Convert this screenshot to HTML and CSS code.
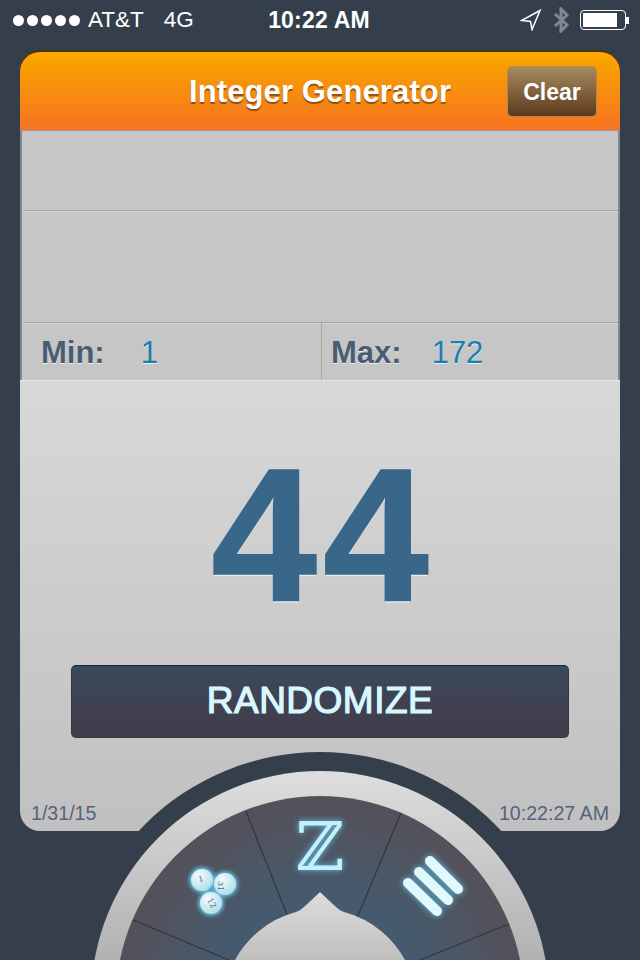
FILE: index.html
```html
<!DOCTYPE html>
<html lang="en">
<head>
<meta charset="utf-8">
<title>Integer Generator</title>
<link rel="stylesheet" href="styles.css">
</head>
<body>
<div class="screen">
  <header class="status">
    <div class="status-left">
      <span class="dots"><i></i><i></i><i></i><i></i><i></i></span>
      <span class="carrier">AT&amp;T</span>
      <span class="network">4G</span>
    </div>
    <div class="status-time">10:22 AM</div>
    <div class="status-right">
      <svg class="ico-loc" width="22" height="22" viewBox="0 0 22 22"><path d="M20 1.5 1.5 11.5 10.5 12.5 12 20.5Z"/></svg>
      <svg class="ico-bt" width="16" height="26" viewBox="0 0 16 26"><path d="M2 7 14 18 8 24V2l6 6L2 19"/></svg>
      <span class="battery"><span class="battery-fill"></span></span>
      <span class="battery-nub"></span>
    </div>
  </header>
  <main class="card">
    <div class="titlebar">
      <h1 class="title">Integer Generator</h1>
      <button class="clear">Clear</button>
    </div>
    <div class="table">
      <div class="row row-a"></div>
      <div class="row row-b"></div>
      <div class="row row-c">
        <div class="cell cell-min"><span class="lab">Min:</span><span class="val">1</span></div>
        <div class="cell cell-max"><span class="lab">Max:</span><span class="val">172</span></div>
      </div>
    </div>
    <div class="panel">
      <div class="result">44</div>
      <button class="randomize">RANDOMIZE</button>
      <div class="stamps"><span>1/31/15</span><span>10:22:27 AM</span></div>
    </div>
  </main>
  <svg class="wheel" width="640" height="220" viewBox="0 740 640 220">
    <defs>
      <linearGradient id="ringG" x1="0" y1="0" x2="0" y2="1">
        <stop offset="0" stop-color="#dedede"/>
        <stop offset="0.45" stop-color="#aeaeae"/>
        <stop offset="1" stop-color="#9a9a9a"/>
      </linearGradient>
      <radialGradient id="faceG" gradientUnits="userSpaceOnUse" cx="320" cy="1000" r="205">
        <stop offset="0.5" stop-color="#455a6e"/>
        <stop offset="0.8" stop-color="#4f5561"/>
        <stop offset="1" stop-color="#55505a"/>
      </radialGradient>
      <linearGradient id="hubG" gradientUnits="userSpaceOnUse" x1="0" y1="892" x2="0" y2="965">
        <stop offset="0" stop-color="#dcdcdc"/>
        <stop offset="1" stop-color="#bdbdbd"/>
      </linearGradient>
      <radialGradient id="ballG" cx="0.35" cy="0.3" r="0.8">
        <stop offset="0" stop-color="#f2fbfd"/>
        <stop offset="1" stop-color="#aed9e8"/>
      </radialGradient>
    </defs>
    <circle class="w-gap" cx="320" cy="1000" r="248"/>
    <circle cx="320" cy="1000" r="229" fill="url(#ringG)"/>
    <circle cx="320" cy="1000" r="204" fill="url(#faceG)"/>
    <g class="w-div">
      <line x1="245.7" y1="810.7" x2="288" y2="917"/>
      <line x1="401" y1="812.7" x2="357" y2="918"/>
      <line x1="133" y1="920" x2="229" y2="960"/>
      <line x1="509" y1="924" x2="420" y2="960"/>
    </g>
    <g class="w-glow">
      <circle cx="202" cy="880" r="11" fill="url(#ballG)"/>
      <circle cx="225" cy="884" r="11" fill="url(#ballG)"/>
      <circle cx="211" cy="903" r="11" fill="url(#ballG)"/>
    </g>
    <text class="w-num" transform="translate(199 882) rotate(-15)">1</text>
    <text class="w-num" transform="translate(221 887) rotate(90) translate(-6 3)">31</text>
    <text class="w-num" transform="translate(207 900) rotate(60)">12</text>
    <text class="w-z" x="320" y="870">ℤ</text>
    <g class="w-bars">
      <line x1="408" y1="883" x2="437" y2="911"/>
      <line x1="419" y1="872" x2="448" y2="900"/>
      <line x1="430" y1="861" x2="458" y2="889"/>
    </g>
    <path class="w-hub" fill="url(#hubG)" d="M320 892 336 907 Q340 911 344 912 A97.5 97.5 0 0 1 407.5 965 H232.5 A97.5 97.5 0 0 1 296 912 Q300 911 304 907Z"/>
  </svg>
</div>
</body>
</html>
```
FILE: styles.css
```css
* { box-sizing: border-box; }
html, body { margin: 0; padding: 0; }
body { background: #353f4c; font-family: "Liberation Sans", Arial, sans-serif; }
.screen { position: relative; width: 640px; height: 960px; overflow: hidden; background: #353f4c; padding: 0 20px; }

.status { display: flex; align-items: center; justify-content: space-between; height: 40px; margin: 0 -20px; padding: 0 11px 0 13px; color: #fff; font-size: 22.5px; position: relative; }
.status-left { display: flex; align-items: center; }
.dots { display: flex; gap: 3px; margin-right: 8px; }
.dots i { width: 11px; height: 11px; border-radius: 50%; background: #fff; display: block; }
.network { margin-left: 20px; }
.status-time { position: absolute; left: 0; right: 2px; text-align: center; font-weight: bold; font-size: 23px; letter-spacing: 0.2px; }
.status-right { display: flex; align-items: center; position: relative; }
.ico-loc { fill: none; stroke: #fff; stroke-width: 1.5; margin-right: 11px; }
.ico-bt { fill: none; stroke: #7f8791; stroke-width: 3; margin-right: 11px; }
.battery { width: 46px; height: 20px; border: 1.5px solid #fff; border-radius: 4px; padding: 2px; display: block; }
.battery-fill { display: block; width: 34px; height: 100%; background: #fff; }
.battery-nub { width: 3px; height: 7px; background: #fff; display: block; }

.card { margin-top: 12px; height: 779px; border-radius: 20px; display: flex; flex-direction: column; overflow: hidden; box-shadow: 0 -1.5px 0 #4a3205; }
.titlebar { height: 78px; flex: none; display: flex; align-items: center; justify-content: flex-end; padding-right: 23px; position: relative; background: linear-gradient(#ffaa00, #f8a000 15%, #f67322); }
.title { position: absolute; left: 0; right: 0; top: 22px; margin: 0; text-align: center; color: #fff; font-size: 31px; line-height: 36px; font-weight: bold; letter-spacing: 0.12px; text-shadow: 0 2px 1px rgba(110, 60, 10, .75); }
.clear { width: 90px; height: 51px; padding: 2px 0 0; border: 1px solid #b48a3f; border-radius: 5px; background: linear-gradient(#a78a60, #5b3a1c); color: #fff; font: bold 23px "Liberation Sans", Arial, sans-serif; }

.table { height: 250px; flex: none; background: #c6c6c6; border-left: 2px solid #7f8791; border-right: 2px solid #7f8791; border-top: 1px solid #9a9a9a; display: flex; flex-direction: column; }
.row { flex: none; border-bottom: 1px solid #a5a5a5; box-shadow: 0 1px 0 #d4d4d4; }
.row-a { height: 80px; margin-left: 2px; }
.row-b { height: 112px; margin-left: 2px; }
.row-c { flex: 1; display: flex; border-bottom: 0; box-shadow: none; }
.cell { display: flex; align-items: center; font-size: 31px; line-height: 55px; padding-top: 2px; }
.cell-min { width: 300px; border-right: 1px solid #a5a5a5; padding-left: 19px; }
.cell-max { flex: 1; padding-left: 9px; }
.lab { font-weight: bold; color: #4a5c74; text-shadow: 0 1px 0 #eee; }
.val { color: #1b7db0; text-shadow: 0 1px 0 #eee; }
.cell-min .val { margin-left: 36px; }
.cell-max .val { margin-left: 30px; }

.panel { flex: 1; position: relative; display: flex; flex-direction: column; align-items: center; background: linear-gradient(#d8d8d8, #c0c0c0); border-top: 1px solid #eaeaea; }
.result { margin-top: 38px; height: 232px; padding-left: 6px; font-size: 190px; line-height: 232px; font-weight: bold; letter-spacing: 6px; color: #38678a; -webkit-text-stroke: 1.5px #38678a; text-shadow: 0 2px 0 #eee; }
.randomize { margin-top: 14px; width: 498px; height: 73px; padding: 0 0 1px; border: 1px solid #33363e; border-top-color: #22252c; border-radius: 5px; background: linear-gradient(#394a5d, #404050 60%, #403e4a); color: #d8f8ff; font: 37px "Liberation Sans", Arial, sans-serif; letter-spacing: 0.5px; -webkit-text-stroke: 1.2px #d8f8ff; }
.stamps { position: absolute; left: 11px; right: 11px; bottom: 6px; display: flex; justify-content: space-between; color: #56647a; font-size: 19.6px; line-height: 24px; }

.wheel { position: absolute; left: 0; top: 740px; display: block; }
.w-gap { fill: #353f4c; }
.w-div line { stroke: #33353d; stroke-width: 1.2; }
.w-glow { filter: drop-shadow(0 0 2px #65c8ec) drop-shadow(0 0 2px #65c8ec); }
.w-num { font: 8px "DejaVu Serif", serif; fill: #4a6c80; }
.w-z { font: 67px "DejaVu Serif", serif; text-anchor: middle; fill: #c4f0fc; filter: drop-shadow(0 0 3px #65c8ec); }
.w-bars { stroke: #e0f9ff; stroke-width: 10; stroke-linecap: round; filter: drop-shadow(0 0 3px #65c8ec); }
```
